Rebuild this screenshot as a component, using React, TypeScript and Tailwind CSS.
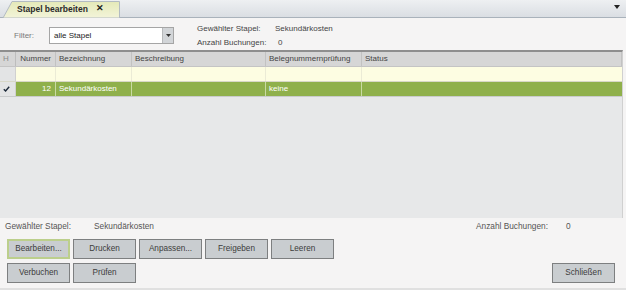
import React from "react";

const HEAD = ["Nummer", "Bezeichnung", "Beschreibung", "Belegnummernprüfung", "Status"];

const gridCols = "grid grid-cols-[16px_40px_76px_134px_96px_1fr]";

const Btn = ({ label, active }: { label: string; active?: boolean }) => (
  <button
    className={
      "w-[63px] h-[20px] flex items-center justify-center text-[8.2px] text-[#3c3c3c] bg-[#c9cdd0] " +
      (active ? "border-2 border-[#bccf8c]" : "border border-[#7d7f80]")
    }
  >
    {label}
  </button>
);

const App: React.FC = () => {
  return (
    <div className="w-[626px] h-[290px] overflow-hidden flex flex-col bg-[#f5f4f4] text-[8px] text-[#3a3a3a] font-['Liberation_Sans',Arial,sans-serif]">
      {/* tab bar */}
      <div className="h-[18px] flex items-end justify-between pl-[2px] pr-[6px] bg-gradient-to-b from-[#eef0f2] to-[#dadee3] border-b border-[#a9b2bb]">
        <div className="relative w-[118px] h-[16px] flex items-center">
          <svg className="absolute inset-0" width="118" height="17" viewBox="0 0 118 17">
            <defs>
              <linearGradient id="tabg" x1="0" y1="0" x2="0" y2="1">
                <stop offset="0" stopColor="#e4e9b8" />
                <stop offset="1" stopColor="#f3f4d9" />
              </linearGradient>
            </defs>
            <polygon points="1,17 10,0.5 117.5,0.5 117.5,17" fill="url(#tabg)" stroke="#b3bbc2" strokeWidth="1" />
          </svg>
          <span className="relative pl-[15px] text-[8.5px] font-bold text-[#2a2a2a]">Stapel bearbeiten</span>
          <span className="relative ml-[8px] text-[9px] font-bold text-[#222]">✕</span>
        </div>
        <svg className="mb-[8px]" width="6" height="4" viewBox="0 0 6 4">
          <polygon points="0,0 6,0 3,4" fill="#222" />
        </svg>
      </div>

      {/* filter row */}
      <div className="h-[32px] flex items-start">
        <div className="mt-[9px] ml-[14px] h-[17px] flex items-center">
          <span className="w-[35px] text-[#7a7a7a]">Filter:</span>
          <div className="w-[125px] h-[17px] flex bg-white border border-[#a5a5a5]">
            <span className="flex-1 pl-[4px] flex items-center text-[#222]">alle Stapel</span>
            <span className="w-[11px] flex items-center justify-center bg-[#d2d5d8] border-l border-[#b7b9bb]">
              <svg width="5" height="3" viewBox="0 0 5 3">
                <polygon points="0,0 5,0 2.5,3" fill="#333" />
              </svg>
            </span>
          </div>
        </div>
        <div className="ml-[23px] mt-[4px] flex flex-col leading-[14px] text-[#444]">
          <div className="flex">
            <span className="w-[78px]">Gewählter Stapel:</span>
            <span>Sekundärkosten</span>
          </div>
          <div className="flex">
            <span className="w-[81px]">Anzahl Buchungen:</span>
            <span>0</span>
          </div>
        </div>
      </div>

      {/* table */}
      <div className="w-[623px] h-[168px] flex flex-col bg-[#e7e8e9] border-t-2 border-[#8e8e8e] border-r border-r-[#d0d0d0]">
        <div className={gridCols + " h-[15px] bg-[#d6d6d6] text-[#444] border-b border-[#c4c4c4]"}>
          <span className="flex items-center pl-[3px] text-[#8a8a8a] border-r border-[#bdbdbd]">H</span>
          {HEAD.map((h, i) => (
            <span
              key={h}
              className={
                "flex items-center border-r border-[#c2c2c2] " +
                (i === 0 ? "justify-end pr-[4px]" : "pl-[3px]")
              }
            >
              {h}
            </span>
          ))}
        </div>
        <div className={gridCols + " h-[15px] bg-[#fdfde2] border-b border-[#d8d8c8]"}>
          <span className="bg-[#e3e4e5] border-r border-[#d0d0d0]" />
          <span className="border-r border-[#ebebd6]" />
          <span className="border-r border-[#ebebd6]" />
          <span className="border-r border-[#ebebd6]" />
          <span className="border-r border-[#ebebd6]" />
          <span />
        </div>
        <div className={gridCols + " h-[15px] bg-[#8fb04b] text-white border-b border-[#c9cbcc]"}>
          <span className="flex items-center pl-[3px] bg-[#e3e4e5] border-r border-[#d0d0d0]">
            <svg width="7" height="6" viewBox="0 0 7 6">
              <polyline points="0.8,3.2 2.6,5 6.2,0.8" fill="none" stroke="#1d2a3a" strokeWidth="1.4" />
            </svg>
          </span>
          <span className="flex items-center justify-end pr-[4px] border-r border-[#c9daa3]">12</span>
          <span className="flex items-center pl-[3px] border-r border-[#c9daa3]">Sekundärkosten</span>
          <span className="border-r border-[#c9daa3]" />
          <span className="flex items-center pl-[3px] border-r border-[#c9daa3]">keine</span>
          <span />
        </div>
      </div>

      {/* bottom */}
      <div className="flex-1 flex flex-col pl-[7px] pr-[11px] border-b-2 border-[#e0e0e0]">
        <div className="h-[16px] flex items-center text-[8.3px] text-[#555] -ml-[2px]">
          <span className="w-[89px]">Gewählter Stapel:</span>
          <span>Sekundärkosten</span>
          <span className="ml-auto w-[90px]">Anzahl Buchungen:</span>
          <span className="w-[49px]">0</span>
        </div>
        <div className="mt-[5px] flex gap-[3px]">
          <Btn label="Bearbeiten..." active />
          <Btn label="Drucken" />
          <Btn label="Anpassen..." />
          <Btn label="Freigeben" />
          <Btn label="Leeren" />
        </div>
        <div className="mt-[4px] flex gap-[3px]">
          <Btn label="Verbuchen" />
          <Btn label="Prüfen" />
          <div className="ml-auto">
            <Btn label="Schließen" />
          </div>
        </div>
      </div>
    </div>
  );
};

export default App;
